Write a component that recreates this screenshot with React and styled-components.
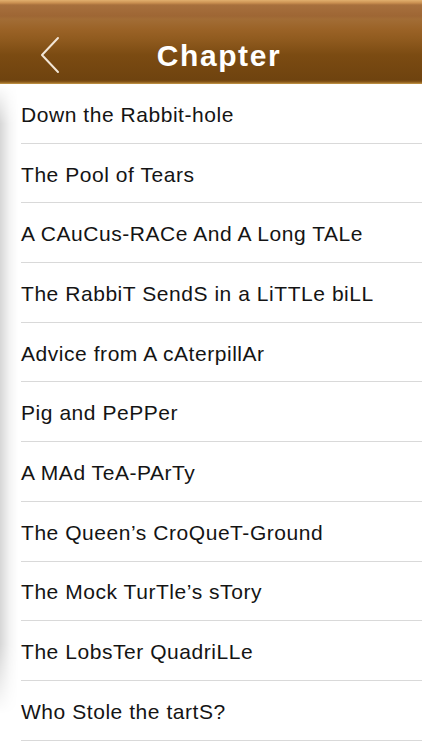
import React from "react";
import styled, { createGlobalStyle } from "styled-components";

const Global = createGlobalStyle`
  html, body { margin: 0; padding: 0; background: #fff; }
  body { font-family: "Liberation Sans", Arial, sans-serif; }
`;

const Screen = styled.div`
  width: 422px;
  height: 750px;
  position: relative;
  overflow: hidden;
  background: #fff;
`;

const Header = styled.header`
  height: 84px;
  box-sizing: border-box;
  display: flex;
  align-items: center;
  justify-content: center;
  position: relative;
  padding-top: 27px;
  padding-left: 16px;
  background: linear-gradient(
    to bottom,
    #e2b06e 0px,
    #c98f50 3px,
    #a7703d 5px,
    #9e6634 16px,
    #a26d36 19px,
    #9a6226 30px,
    #8f5a1e 40px,
    #7b4b12 55px,
    #6f430f 80px,
    #8a5a1a 82px,
    #c89a4a 84px
  );
`;

const Back = styled.button`
  position: absolute;
  left: 38px;
  top: 36px;
  width: 24px;
  height: 38px;
  padding: 0;
  border: 0;
  background: none;
  display: flex;
`;

const Title = styled.h1`
  margin: 0;
  color: #fff;
  font-family: "Liberation Sans", Arial, sans-serif;
  font-weight: 700;
  font-size: 30px;
  letter-spacing: 1.6px;
`;

const List = styled.ul`
  list-style: none;
  margin: 0;
  padding: 0;
  position: relative;
`;

const Shade = styled.div`
  position: absolute;
  left: 0;
  top: 84px;
  width: 18px;
  height: 630px;
  pointer-events: none;
  background: linear-gradient(to right, rgba(0,0,0,0.16), rgba(0,0,0,0.05) 50%, rgba(0,0,0,0));
  -webkit-mask-image: linear-gradient(to bottom, transparent 0, #000 40px, #000 560px, transparent 630px);
  mask-image: linear-gradient(to bottom, transparent 0, #000 40px, #000 560px, transparent 630px);
`;

const Row = styled.li`
  height: 59.7px;
  box-sizing: border-box;
  margin-left: 21px;
  border-bottom: 1px solid #d9d9d9;
  display: flex;
  align-items: center;
  font-size: 21px;
  letter-spacing: 0.55px;
  color: #141414;
  padding-top: 3px;
`;

const chapters = [
  "Down the Rabbit-hole",
  "The Pool of Tears",
  "A CAuCus-RACe And A Long TALe",
  "The RabbiT SendS in a LiTTLe biLL",
  "Advice from A cAterpillAr",
  "Pig and PePPer",
  "A MAd TeA-PArTy",
  "The Queen\u2019s CroQueT-Ground",
  "The Mock TurTle\u2019s sTory",
  "The LobsTer QuadriLLe",
  "Who Stole the tartS?",
];

export default function App() {
  return (
    <Screen>
      <Global />
      <Header>
        <Back aria-label="Back">
          <svg width="24" height="38" viewBox="0 0 24 38">
            <path d="M20 2 L4 19 L20 36" fill="none" stroke="#f3e6d6" strokeWidth="2" strokeLinecap="round" strokeLinejoin="round" />
          </svg>
        </Back>
        <Title>Chapter</Title>
      </Header>
      <List>
        {chapters.map((c) => (
          <Row key={c}>{c}</Row>
        ))}
      </List>
      <Shade />
    </Screen>
  );
}
